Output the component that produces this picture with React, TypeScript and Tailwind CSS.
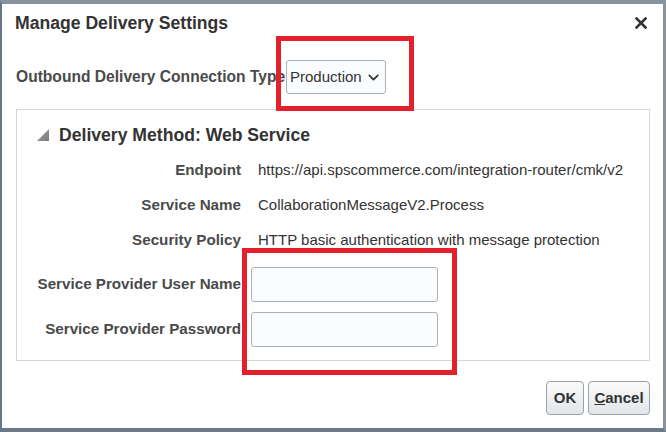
import { ChevronDown } from 'lucide-react';

const font = { fontFamily: '"Liberation Sans", Arial, sans-serif' };

function InfoRow({ label, value }: { label: string; value: string }) {
  return (
    <div className="flex h-[35px] items-center">
      <div className="w-[224px] text-right text-[15.2px] font-bold text-[#4a4a4a]">{label}</div>
      <div className="pl-[17px] text-[15px] text-[#333]">{value}</div>
    </div>
  );
}

function InputRow({ label, className }: { label: string; className?: string }) {
  return (
    <div className={`flex h-[35px] items-center ${className ?? ''}`}>
      <div className="w-[224px] text-right text-[15.2px] font-bold whitespace-nowrap text-[#4a4a4a]">{label}</div>
      <input
        type="text"
        className="ml-[10px] h-[35px] w-[187px] rounded-[3px] border border-[#a9b1ba] bg-[#fbfcfd] outline-none"
      />
    </div>
  );
}

export default function App() {
  return (
    <div
      style={font}
      className="relative h-[432px] w-[666px] overflow-hidden border-t-4 border-r-[3px] border-b-4 border-l-2 border-t-[#8893a0] border-r-[#8a949e] border-b-[#6c7a88] border-l-[#66768a] bg-white"
    >
      {/* header */}
      <div className="flex items-start justify-between pt-[8px] pl-[13px] pr-[16px]">
        <h1 className="text-[17.6px] leading-[22px] font-bold text-[#333]">Manage Delivery Settings</h1>
        <svg width="12" height="12" viewBox="0 0 12 12" className="mt-[5px]">
          <path d="M1.5 1.5 L10.5 10.5 M10.5 1.5 L1.5 10.5" stroke="#333" strokeWidth="2.6" strokeLinecap="square" />
        </svg>
      </div>

      {/* connection type */}
      <div className="mt-[26px] flex h-[34px] items-center pl-[14px]">
        <div className="w-[270px] text-[15.6px] font-bold whitespace-nowrap text-[#4a4a4a]">
          Outbound Delivery Connection Type
        </div>
        <div className="flex h-[34px] w-[100px] items-center rounded-[3px] border border-[#a9b1ba] bg-[#fbfcfd] pr-[3px] pl-[3px] text-[15px] text-[#333]">
          <span>Production</span>
          <ChevronDown size={17} strokeWidth={2.3} color="#333" className="ml-auto" />
        </div>
      </div>

      {/* panel */}
      <div className="mt-[15px] mr-[13px] ml-[14px] border border-[#d6d6d6] pb-[13px]">
        <div className="mt-[13px] flex h-[24px] items-center pl-[20px]">
          <svg width="12" height="12" viewBox="0 0 12 12">
            <defs>
              <linearGradient id="tri" x1="0" y1="0" x2="1" y2="1">
                <stop offset="0" stopColor="#a8a8a8" />
                <stop offset="1" stopColor="#777" />
              </linearGradient>
            </defs>
            <path d="M12 0 L12 12 L0 12 Z" fill="url(#tri)" />
          </svg>
          <h2 className="ml-[10px] text-[17.6px] font-bold text-[#333]">Delivery Method: Web Service</h2>
        </div>

        <div className="mt-[6px]">
          <InfoRow label="Endpoint" value="https://api.spscommerce.com/integration-router/cmk/v2" />
          <InfoRow label="Service Name" value="CollaborationMessageV2.Process" />
          <InfoRow label="Security Policy" value="HTTP basic authentication with message protection" />
          <InputRow label="Service Provider User Name" className="mt-[9px]" />
          <InputRow label="Service Provider Password" className="mt-[10px]" />
        </div>
      </div>

      {/* buttons */}
      <div className="mt-[20px] flex justify-end gap-[4px] pr-[13px]">
        <button className="h-[34px] w-[38px] rounded-[4px] border border-[#9ca2a8] bg-linear-to-b from-[#fafafa] to-[#e2e6ea] text-[15px] font-bold text-[#333]">
          OK
        </button>
        <button className="h-[34px] w-[62px] rounded-[4px] border border-[#9ca2a8] bg-linear-to-b from-[#fafafa] to-[#e2e6ea] text-[15px] font-bold text-[#333]">
          <span className="underline">C</span>ancel
        </button>
      </div>

      {/* red highlight boxes */}
      <div className="absolute top-[32px] left-[274px] h-[75px] w-[138px] border-[5px] border-[#e3202c]" />
      <div className="absolute top-[244px] left-[240px] h-[127px] w-[215px] border-[5px] border-[#e3202c]" />
    </div>
  );
}
